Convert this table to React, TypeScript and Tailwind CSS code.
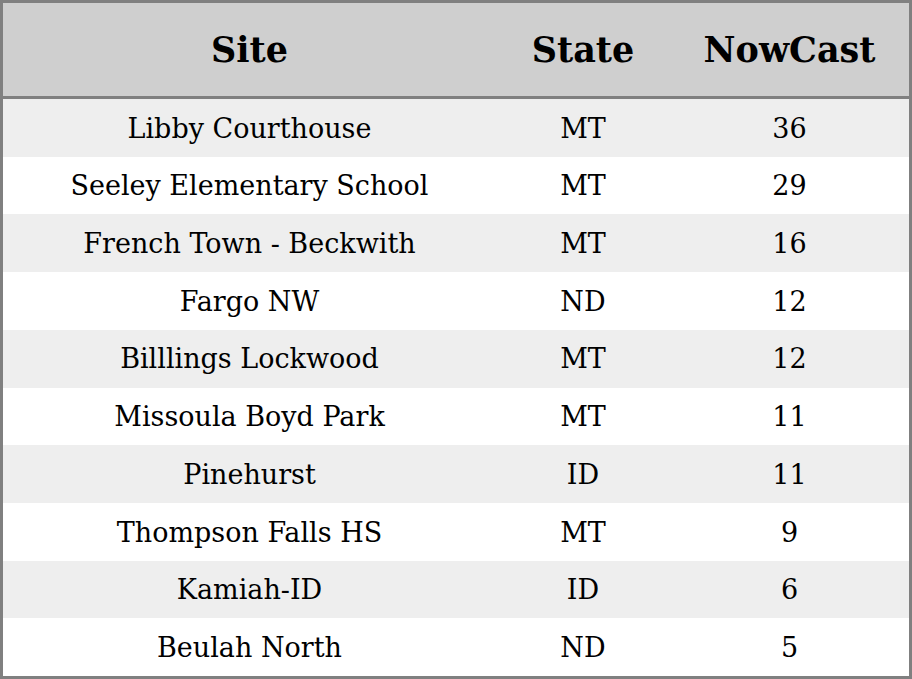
import React from 'react';

type Row = { site: string; state: string; nowcast: number };

const ROWS: Row[] = [
  { site: 'Libby Courthouse', state: 'MT', nowcast: 36 },
  { site: 'Seeley Elementary School', state: 'MT', nowcast: 29 },
  { site: 'French Town - Beckwith', state: 'MT', nowcast: 16 },
  { site: 'Fargo NW', state: 'ND', nowcast: 12 },
  { site: 'Billlings Lockwood', state: 'MT', nowcast: 12 },
  { site: 'Missoula Boyd Park', state: 'MT', nowcast: 11 },
  { site: 'Pinehurst', state: 'ID', nowcast: 11 },
  { site: 'Thompson Falls HS', state: 'MT', nowcast: 9 },
  { site: 'Kamiah-ID', state: 'ID', nowcast: 6 },
  { site: 'Beulah North', state: 'ND', nowcast: 5 },
];

export default function App(): React.JSX.Element {
  return (
    <div className="w-[912px] h-[679px] bg-white font-['DejaVu_Serif',serif] text-black">
      <div className="flex flex-col h-full border-[3px] border-[#808080]">
        <div className="flex h-[96px] shrink-0 pt-[2px] bg-[#cfcfcf] border-b-[3px] border-[#808080] text-[35px] font-bold">
          <div className="w-[493px] flex items-center justify-center">Site</div>
          <div className="w-[174px] flex items-center justify-center">State</div>
          <div className="flex-1 flex items-center justify-center">NowCast</div>
        </div>
        {ROWS.map((r, i) => (
          <div
            key={r.site}
            className={`flex flex-1 pt-[2px] text-[27px] ${i % 2 === 0 ? 'bg-[#eeeeee]' : 'bg-white'}`}
          >
            <div className="w-[493px] flex items-center justify-center">{r.site}</div>
            <div className="w-[174px] flex items-center justify-center">{r.state}</div>
            <div className="flex-1 flex items-center justify-center">{r.nowcast}</div>
          </div>
        ))}
      </div>
    </div>
  );
}
